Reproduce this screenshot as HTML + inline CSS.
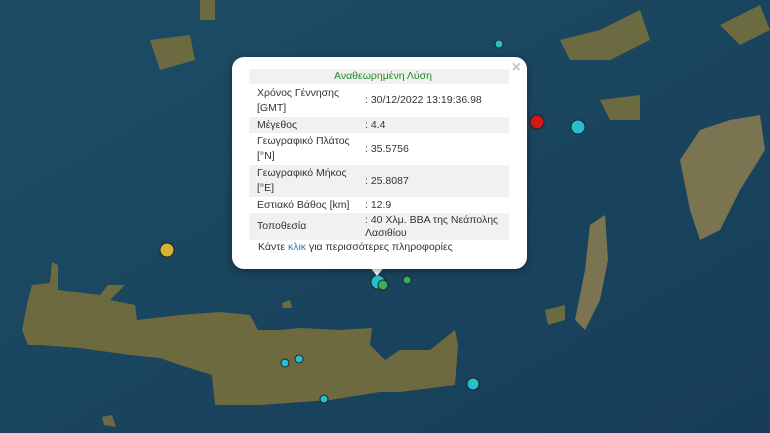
<!DOCTYPE html>
<html><head><meta charset="utf-8"><style>
body{margin:0;width:770px;height:433px;overflow:hidden;background:#1c4560;font-family:"Liberation Sans",sans-serif}
svg{position:absolute;left:0;top:0}
.pop{position:absolute;left:232px;top:57px;width:295px;height:212px;background:#fff;border-radius:12px;box-shadow:0 2px 8px rgba(0,0,0,.4)}
.tip{position:absolute;left:369px;top:266px;width:0;height:0;border-left:8px solid transparent;border-right:8px solid transparent;border-top:10px solid #fff}
.x{position:absolute;right:6px;top:2px;color:#c3c3c3;font-size:16px;font-weight:bold}
table{position:absolute;left:17px;top:12px;width:260px;border-collapse:collapse;font-size:10.5px;color:#333;line-height:15px}
td{padding:0 0 0 8px;vertical-align:middle}
tr.g{background:#f1f1f1}
td.v{padding-left:0;width:144px}
.h{color:#1c8f1c;text-align:center;height:15px}
.lk{position:absolute;left:26px;top:184px;font-size:10.5px;color:#333}
.lk span{color:#2a7fc0}
</style></head><body>
<svg width="770" height="433">
<defs><linearGradient id="s" x1="0" y1="0" x2="1" y2="1"><stop offset="0" stop-color="#1d4d66"/><stop offset="1" stop-color="#173d58"/></linearGradient></defs>
<rect width="770" height="433" fill="url(#s)"/>
<g fill="#6b6a40">
<polygon points="22,330 28,300 32,285 50,283 52,262 58,265 58,290 100,295 108,285 125,285 110,300 135,305 137,320 180,315 220,312 250,315 258,330 280,330 300,328 340,330 372,328 370,345 385,360 400,350 430,350 455,330 458,345 455,385 400,392 380,392 330,400 260,405 215,405 212,375 180,365 160,358 130,355 80,348 40,345 28,345" fill="#6e6a3f"/>
<polygon points="680,160 700,130 730,120 760,115 765,150 740,190 720,230 700,240 690,210" fill="#7a7550"/>
<polygon points="590,225 605,215 608,260 600,300 585,330 575,320 585,270" fill="#7a7550"/>
<polygon points="560,40 600,30 640,10 650,40 610,60 570,60"/>
<polygon points="600,100 640,95 640,120 610,120"/>
<polygon points="150,40 190,35 195,60 160,70"/>
<polygon points="200,0 215,0 215,20 200,20"/>
<polygon points="720,25 760,5 770,30 740,45"/>
<polygon points="545,310 565,305 565,320 548,325"/>
<polygon points="282,303 290,300 292,308 283,308"/>
<polygon points="102,417 112,415 116,427 104,425"/>
</g>
<g stroke="#222" stroke-width="1">
<circle cx="167" cy="250" r="7" fill="#d8b235"/>
<circle cx="537" cy="122" r="7" fill="#d01818"/>
<circle cx="578" cy="127" r="7" fill="#26bfd0"/>
<circle cx="499" cy="44" r="4" fill="#26bfd0"/>
<circle cx="378" cy="282" r="7" fill="#26bfd0"/>
<circle cx="383" cy="285" r="5" fill="#35b060"/>
<circle cx="407" cy="280" r="4" fill="#35b060"/>
<circle cx="285" cy="363" r="4" fill="#26bfd0"/>
<circle cx="299" cy="359" r="4" fill="#26bfd0"/>
<circle cx="324" cy="399" r="4" fill="#26bfd0"/>
<circle cx="473" cy="384" r="6" fill="#26bfd0"/>
</g>
</svg>
<div class="tip"></div>
<div class="pop"><div class="x">×</div>
<table>
<tr class="g"><td colspan="2" class="h">Αναθεωρημένη Λύση</td></tr>
<tr style="height:33px"><td>Χρόνος Γέννησης<br>[GMT]</td><td class="v">: 30/12/2022 13:19:36.98</td></tr>
<tr class="g" style="height:16px"><td>Μέγεθος</td><td class="v">: 4.4</td></tr>
<tr style="height:32px"><td>Γεωγραφικό Πλάτος<br>[°N]</td><td class="v">: 35.5756</td></tr>
<tr class="g" style="height:32px"><td>Γεωγραφικό Μήκος<br>[°E]</td><td class="v">: 25.8087</td></tr>
<tr style="height:16px"><td>Εστιακό Βάθος [km]</td><td class="v">: 12.9</td></tr>
<tr class="g" style="height:27px"><td>Τοποθεσία</td><td class="v" style="line-height:13px">: 40 Χλμ. ΒΒΑ της Νεάπολης Λασιθίου</td></tr>
</table>
<div class="lk">Κάντε <span>κλικ</span> για περισσότερες πληροφορίες</div>
</div>
</body></html>
